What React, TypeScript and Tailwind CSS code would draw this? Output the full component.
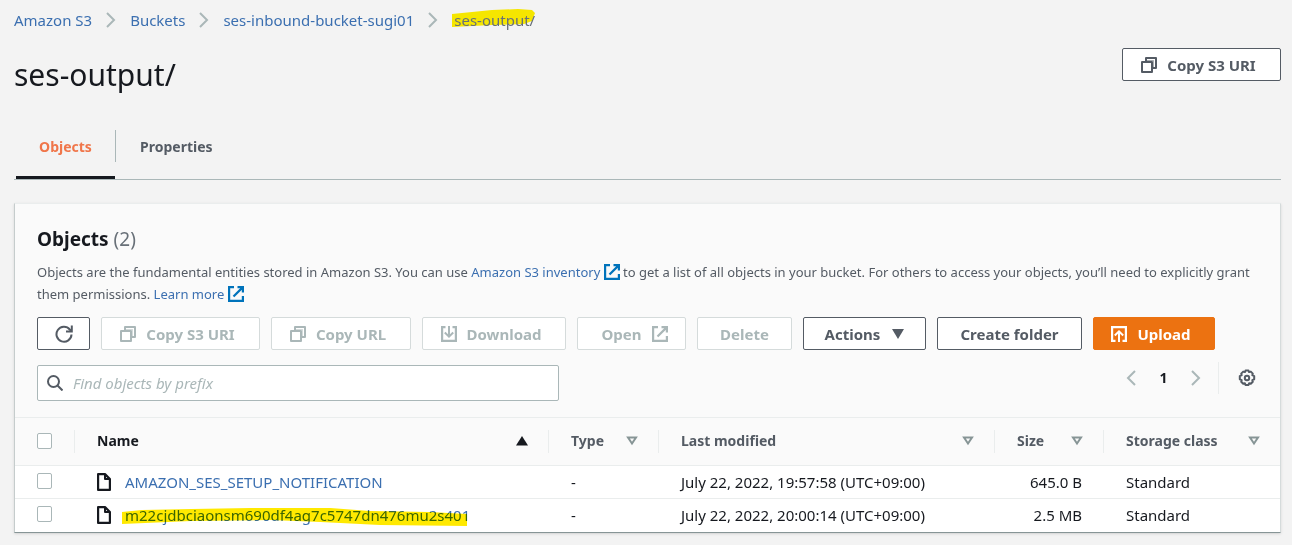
import { useState } from 'react'
import type { ReactNode } from 'react'
import { clsx } from 'clsx'

interface S3Object {
  name: string
  modified: string
  size: string
  marked?: boolean
}

const crumbs = ['Amazon S3', 'Buckets', 'ses-inbound-bucket-sugi01']

const objects: S3Object[] = [
  { name: 'AMAZON_SES_SETUP_NOTIFICATION', modified: 'July 22, 2022, 19:57:58 (UTC+09:00)', size: '645.0 B' },
  { name: 'm22cjdbciaonsm690df4ag7c5747dn476mu2s401', modified: 'July 22, 2022, 20:00:14 (UTC+09:00)', size: '2.5 MB', marked: true },
]

/* Icons, most of them on a 16px grid */

function CopyIcon() {
  return (
    <svg viewBox="0 0 16 16" className="size-4 shrink-0" fill="none" stroke="currentColor" strokeWidth="2" strokeLinejoin="round" aria-hidden="true">
      <path d="M1 5h10v10H1z" />
      <path d="M5 5V1h10v10h-4" />
      <path d="M5 3.500h7.500V11" strokeWidth="1" opacity="0.5" />
    </svg>
  )
}

function ExternalIcon() {
  return (
    <svg viewBox="0 0 16 16" className="inline-block size-4 shrink-0 align-[-3px]" fill="none" stroke="currentColor" strokeWidth="2.2" aria-hidden="true">
      <path d="M6 1.100H1.100v13.800h13.800V10" />
      <path d="M9.500 1.100h5.400v5.400M14.900 1.100 5.500 10.500" />
    </svg>
  )
}

function DownloadIcon() {
  return (
    <svg viewBox="0 0 16 16" className="size-4 shrink-0" fill="none" stroke="currentColor" strokeWidth="2.2" aria-hidden="true">
      <path d="M4.500 1.100H1.100v13.800h13.800V1.100h-3.400" />
      <path d="M8 0v10.500M3.800 6.500 8 10.700l4.200-4.200" strokeWidth="2" />
    </svg>
  )
}

function UploadIcon() {
  return (
    <svg viewBox="0 0 16 16" className="size-4 shrink-0" fill="none" stroke="currentColor" strokeWidth="2.2" aria-hidden="true">
      <path d="M4.500 14.900H1.100V1.100h13.800v13.800h-3.400" />
      <path d="M8 16V5.500M3.800 9.500 8 5.300l4.200 4.200" strokeWidth="2" />
    </svg>
  )
}

function RefreshIcon() {
  return (
    <svg viewBox="0 0 18 18" className="size-[18px]" fill="none" stroke="currentColor" strokeWidth="2" aria-hidden="true">
      <path d="M16.500 9.500A7.500 7.500 0 1 1 14.800 4.500l1.200 1.200" />
      <path d="M16.800 0.500v6H11" />
    </svg>
  )
}

function SearchIcon() {
  return (
    <svg viewBox="0 0 16 16" className="size-4 shrink-0 text-[#545b64]" fill="none" stroke="currentColor" strokeWidth="2" aria-hidden="true">
      <circle cx="6.500" cy="6.500" r="5.500" />
      <path d="m10.500 10.500 5 5" />
    </svg>
  )
}

function GearIcon() {
  return (
    <svg viewBox="0 0 18 18" className="size-[18px]" fill="none" stroke="currentColor" strokeWidth="2" strokeLinejoin="round" aria-hidden="true">
      <path d="M7.500 1.500h3l.6 1.600 1.700-.5 2 2-.5 1.600 1.900.9v3.200l-1.900.9.500 1.600-2 2-1.700-.5-.6 1.700h-3l-.6-1.700-1.700.5-2-2 .5-1.600-1.900-.9V7.100l1.900-.9-.5-1.600 2-2 1.700.5z" />
      <circle cx="9" cy="9" r="2.200" />
    </svg>
  )
}

function FileIcon() {
  return (
    <svg viewBox="0 0 14 18" className="h-[18px] w-3.5 shrink-0 text-[#16191f]" fill="none" stroke="currentColor" strokeWidth="2.200" strokeLinejoin="round" aria-hidden="true">
      <path d="M1.100 1.100H8L12.900 6v10.900H1.100z" />
      <path d="M8 1v5h5" strokeWidth="2" />
    </svg>
  )
}

function Chevron({ left = false }: { left?: boolean }) {
  return (
    <svg viewBox="0 0 10 16" className="h-4 w-2.5 shrink-0 text-[#aab7b8]" fill="none" stroke="currentColor" strokeWidth="2" aria-hidden="true">
      <path d={left ? 'M9 1 2 8l7 7' : 'm1 1 7 7-7 7'} />
    </svg>
  )
}

function SortIcon({ active = false }: { active?: boolean }) {
  return active ? (
    <svg viewBox="0 0 12 10" className="h-2.5 w-3 shrink-0 text-[#16191f]" fill="currentColor" aria-hidden="true">
      <path d="M6 0 12 9.500H0z" />
    </svg>
  ) : (
    <svg viewBox="0 0 12 10" className="h-2.5 w-3 shrink-0 text-[#879596]" fill="none" stroke="currentColor" strokeWidth="2" aria-hidden="true">
      <path d="M2 1.500h8L6 7.500z" />
    </svg>
  )
}

interface ButtonProps {
  children: ReactNode
  className?: string
  disabled?: boolean
  primary?: boolean
  label?: string
}

function Button({ children, className, disabled, primary, label }: ButtonProps) {
  return (
    <button
      type="button"
      disabled={disabled}
      aria-label={label}
      className={clsx(
        'flex h-[33px] shrink-0 items-center justify-center rounded-xs border text-[15px] leading-5 font-bold whitespace-nowrap',
        primary && 'border-[#ec7211] bg-[#ec7211] text-white',
        disabled && 'border-[#d5dbdb] bg-white text-[#aab7b8]',
        !primary && !disabled && 'border-[#545b64] bg-white text-[#545b64]',
        className,
      )}
    >
      {children}
    </button>
  )
}

function Checkbox({ label }: { label: string }) {
  return (
    <input
      type="checkbox"
      aria-label={label}
      className="mb-0.5 block h-4 w-[15px] appearance-none rounded-xs border border-[#aab7b8] bg-white checked:bg-[#0073bb]"
    />
  )
}

function HeaderCell({ title, active = false, last = false }: { title: string; active?: boolean; last?: boolean }) {
  return (
    <th scope="col" aria-sort={active ? 'ascending' : undefined} className="py-3 pl-0 font-bold">
      <div
        className={clsx(
          'flex h-[23px] items-center justify-between pr-5 pb-0.5 pl-[22px] text-sm',
          !last && 'border-r border-[#eaeded]',
          active ? 'text-[#16191f]' : 'text-[#545b64]',
        )}
      >
        {title}
        <SortIcon active={active} />
      </div>
    </th>
  )
}

export default function App() {
  const [query, setQuery] = useState('')

  return (
    <div className="min-h-screen bg-[#f3f3f3] pr-[11px] pb-3 pl-3.5 font-['Noto_Sans','Open_Sans',sans-serif] text-[15px] leading-5 text-[#16191f]">
      <nav aria-label="Breadcrumb" className="flex h-10 items-center gap-3.5 text-[#3b6fb0]">
        {crumbs.map((crumb) => (
          <span key={crumb} className="flex items-center gap-3.5">
            <a href="#">{crumb}</a>
            <Chevron />
          </span>
        ))}
        <span aria-current="page" className="relative pl-0.5 text-[#687078]">
          <svg viewBox="0 0 84 18" preserveAspectRatio="none" className="absolute -top-px left-0 h-[18px] w-[84px]" aria-hidden="true">
            <path d="M0 5 40 1 66 0l14 1 3 3-3 8-8 3-32 1-40 2z" fill="#f5e600" />
          </svg>
          <span className="relative">ses-output/</span>
        </span>
      </nav>

      <header className="flex items-start justify-between pt-2">
        <h1 className="pt-[9px] text-[30px] leading-9">ses-output/</h1>
        <Button className="w-[159px] gap-2.5 pr-1.5">
          <CopyIcon />
          Copy S3 URI
        </Button>
      </header>

      <div role="tablist" className="mt-[29px] flex border-b border-[#aab7b8] text-sm font-bold text-[#545b64]">
        <button type="button" role="tab" aria-selected="true" className="ml-0.5 h-[57px] w-[99px] border-b-3 border-[#16191f] pb-1 text-[#f0764a]">
          Objects
        </button>
        <span className="mt-2 h-8 w-px bg-[#aab7b8]" />
        <button type="button" role="tab" aria-selected="false" className="h-[57px] px-6 pb-[7px]">
          Properties
        </button>
      </div>

      <main className="mt-[23px] border border-t-[#eaeded] border-r-[#d5dbdb] border-b-[#879596] border-l-[#c5cccc] bg-[#fafafa] shadow-sm">
        <section className="px-[22px] pt-[19px] pb-4">
          <h2 className="text-[19px] leading-8 font-bold">
            Objects <span className="font-normal text-[#687078]">(2)</span>
          </h2>
          <p className="mt-1.5 text-[13px] leading-[22px] text-[#545b64]">
            Objects are the fundamental entities stored in Amazon S3. You can use{' '}
            <a href="#" className="text-[#0073bb]">
              <span className="text-[#3b6fb0]">Amazon S3 inventory</span> <ExternalIcon />
            </a>{' '}
            to get a list of all objects in your bucket. For others to access your objects, you’ll need to explicitly grant them permissions.{' '}
            <a href="#" className="text-[#0073bb]">
              <span className="text-[#3b6fb0]">Learn more</span> <ExternalIcon />
            </a>
          </p>

          <div className="mt-3 flex flex-wrap gap-[11px]">
            <Button className="w-[53px]" label="Refresh">
              <RefreshIcon />
            </Button>
            <Button disabled className="w-[159px] gap-2.5 pr-1.5">
              <CopyIcon />
              Copy S3 URI
            </Button>
            <Button disabled className="w-[140px] gap-2.5 pr-1.5">
              <CopyIcon />
              Copy URL
            </Button>
            <Button disabled className="w-36 gap-2.5 pr-1.5">
              <DownloadIcon />
              Download
            </Button>
            <Button disabled className="w-[109px] gap-2.5 pl-1.5">
              Open
              <ExternalIcon />
            </Button>
            <Button disabled className="w-[95px]">
              Delete
            </Button>
            <Button className="w-[123px] gap-3">
              Actions
              <svg viewBox="0 0 12 10" className="h-2.5 w-3" fill="currentColor" aria-hidden="true">
                <path d="M0 0h12L6 10z" />
              </svg>
            </Button>
            <Button className="w-[145px]">Create folder</Button>
            <Button primary className="w-[122px] gap-2.5 pr-1.5">
              <UploadIcon />
              Upload
            </Button>
          </div>

          <div className="mt-[11px] flex items-start justify-between">
            <label className="mt-1 flex h-9 w-[522px] items-center gap-2.5 rounded-xs border border-[#aab7b8] bg-white px-[9px]">
              <SearchIcon />
              <input
                type="search"
                aria-label="Find objects by prefix"
                placeholder="Find objects by prefix"
                value={query}
                onChange={(e) => setQuery(e.target.value)}
                className="min-w-0 flex-1 outline-none placeholder:text-[#aab7b8] placeholder:italic"
              />
            </label>
            <div className="flex h-[34px] items-center pr-0.5">
              <button type="button" aria-label="Previous page">
                <Chevron left />
              </button>
              <span className="w-[55px] text-center text-sm font-bold">1</span>
              <button type="button" aria-label="Next page">
                <Chevron />
              </button>
              <span className="mr-[19px] ml-[17px] h-8 w-px bg-[#eaeded]" />
              <button type="button" aria-label="Preferences" className="text-[#545b64]">
                <GearIcon />
              </button>
            </div>
          </div>
        </section>

        <table className="w-full table-fixed border-collapse text-left">
          <colgroup>
            <col className="w-[60px]" />
            <col />
            <col className="w-[110px]" />
            <col className="w-[336px]" />
            <col className="w-[109px]" />
            <col className="w-[176px]" />
          </colgroup>
          <thead>
            <tr className="border-y border-[#eaeded]">
              <th className="py-3">
                <div className="flex h-[23px] items-center border-r border-[#eaeded] pl-[22px]">
                  <Checkbox label="Select all objects" />
                </div>
              </th>
              <HeaderCell title="Name" active />
              <HeaderCell title="Type" />
              <HeaderCell title="Last modified" />
              <HeaderCell title="Size" />
              <HeaderCell title="Storage class" last />
            </tr>
          </thead>
          <tbody>
            {objects.map((object) => (
              <tr key={object.name} className="h-[33px] border-b border-[#eaeded] bg-white last:border-b-0">
                <td className="pl-[22px]">
                  <Checkbox label={`Select ${object.name}`} />
                </td>
                <td className="pl-[22px]">
                  <div className="flex items-center gap-3.5">
                    <FileIcon />
                    <a href="#" className="relative text-[#3b6fb0]">
                      {object.name}
                      {object.marked && (
                        <svg viewBox="0 0 348 18" preserveAspectRatio="none" className="absolute top-[3px] -left-[3px] h-[18px] w-full mix-blend-multiply" aria-hidden="true">
                          <path d="M0 4 20 2 70 1 130 0h80l40 3 60 1 38 2v12l-88-1-60-3-50-2-80 1-70 3z" fill="#ffe900" />
                        </svg>
                      )}
                    </a>
                  </div>
                </td>
                <td className="pl-[22px]">-</td>
                <td className="pl-[22px]">{object.modified}</td>
                <td className="pr-[22px] text-right">{object.size}</td>
                <td className="pl-[22px]">Standard</td>
              </tr>
            ))}
          </tbody>
        </table>
      </main>
    </div>
  )
}
